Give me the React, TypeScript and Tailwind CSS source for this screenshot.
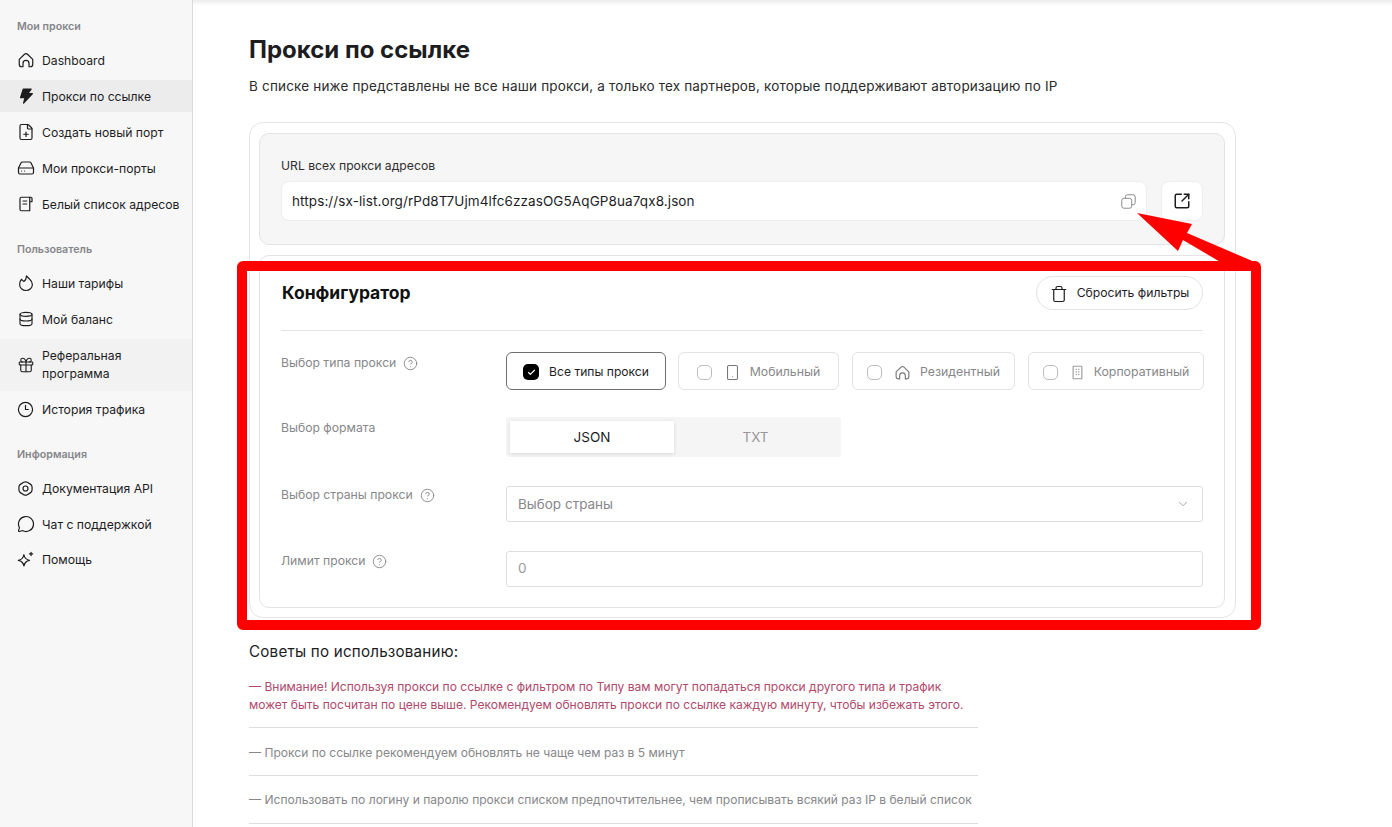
import { ChevronDown, CircleHelp, Check, Clock3, Database, FilePlus, Gift, HardDrive, MessageCircle, Smartphone, SquareArrowOutUpRight, Trash } from 'lucide-react'
import type { ReactNode } from 'react'

const HomeIcon = ({ className = '' }: { className?: string }) => (
  <svg viewBox="0 0 24 24" fill="none" stroke="currentColor" strokeWidth="1.6" strokeLinecap="round" strokeLinejoin="round" className={className}>
    <path d="M3 11.2 10 4.3a2.8 2.8 0 0 1 4 0l7 6.9v6.3a3.5 3.5 0 0 1-3.5 3.5H16v-4.5a4 4 0 0 0-8 0V21H6.500A3.500 3.500 0 0 1 3 17.500Z" />
  </svg>
)

const BoltIcon = ({ className = '' }: { className?: string }) => (
  <svg viewBox="0 0 24 24" fill="currentColor" className={className}>
    <path d="M8.500 2h10.200c.8 0 1.200.9.700 1.500L16 8h4.300c.9 0 1.300 1 .7 1.600L9.400 22c-.6.600-1.600 0-1.400-.8L9.600 15H5c-.7 0-1.200-.7-1-1.300L7.500 2.700c.1-.4.500-.7 1-.7Z" />
  </svg>
)

const NoteIcon = ({ className = '' }: { className?: string }) => (
  <svg viewBox="0 0 24 24" fill="none" stroke="currentColor" strokeWidth="1.6" strokeLinecap="round" strokeLinejoin="round" className={className}>
    <path d="M17 21H6a2 2 0 0 1-2-2V5a2 2 0 0 1 2-2h11v18Z" />
    <path d="M17 3h1.500A1.500 1.500 0 0 1 20 4.500V9h-3" />
    <path d="M8 8h5M8 12h5" />
  </svg>
)

const FlameIcon = ({ className = '' }: { className?: string }) => (
  <svg viewBox="0 0 24 24" fill="none" stroke="currentColor" strokeWidth="1.6" strokeLinecap="round" strokeLinejoin="round" className={className}>
    <path d="M6 7C4.200 9 3.500 11.800 3.500 14a8.500 8 0 0 0 17 0c0-4-2.600-6.300-4.500-8-1.300-1.200-2.500-2.300-3.300-3.500-.1 3-1.400 6-3.500 7.500C8.300 9.300 7 8.300 6 7Z" />
  </svg>
)

const GearIcon = ({ className = '' }: { className?: string }) => (
  <svg viewBox="0 0 24 24" fill="none" stroke="currentColor" strokeWidth="1.7" strokeLinecap="round" strokeLinejoin="round" className={className}>
    <path d="M9.500 3.300a5 5 0 0 1 5 0l4.300 2.500a5 5 0 0 1 2.500 4.300v3.800a5 5 0 0 1-2.500 4.300l-4.300 2.500a5 5 0 0 1-5 0l-4.300-2.500a5 5 0 0 1-2.500-4.300v-3.800a5 5 0 0 1 2.500-4.300Z" />
    <circle cx="12" cy="12" r="3.500" />
  </svg>
)

const SparkIcon = ({ className = '' }: { className?: string }) => (
  <svg viewBox="0 0 24 24" fill="none" stroke="currentColor" strokeWidth="1.6" strokeLinecap="round" strokeLinejoin="round" className={className}>
    <path d="M10 6c.8 4.200 2.800 6.200 7 7-4.200.8-6.200 2.800-7 7-.8-4.200-2.800-6.200-7-7 4.200-.8 6.200-2.800 7-7Z" />
    <path d="M19 3v4M17 5h4" />
  </svg>
)

const BuildingIcon = ({ className = '' }: { className?: string }) => (
  <svg viewBox="0 0 24 24" fill="none" stroke="currentColor" strokeWidth="1.8" className={className}>
    <rect x="5" y="2" width="14" height="20" rx="1" />
    <path d="M9 7h2M13 7h2M9 11h2M13 11h2M9 15h2M13 15h2" />
  </svg>
)

const CopyIcon = ({ className = '' }: { className?: string }) => (
  <svg viewBox="0 0 24 24" fill="none" stroke="currentColor" strokeWidth="1.4" strokeLinejoin="round" className={className}>
    <rect x="2.500" y="7.500" width="14" height="14" rx="3" />
    <path d="M7.500 7.500V5.500a3 3 0 0 1 3-3h8a3 3 0 0 1 3 3v8a3 3 0 0 1-3 3h-2" />
  </svg>
)

function Label({ children }: { children: ReactNode }) {
  return <div className="h-[18px] pl-[17px] pt-[1px] text-[10.700px] leading-[18px] font-semibold text-[#86868a]">{children}</div>
}

function NavItem({ icon, active, soft, children }: { icon: ReactNode; active?: boolean; soft?: boolean; children: ReactNode }) {
  let state = 'h-[36px]'
  if (active) state = 'my-[2px] h-[32px] bg-[#ececec]'
  if (soft) state = 'mt-[2px] bg-[#f2f2f2] pb-[8px] pt-[7px]'
  return (
    <div className={`flex items-center gap-[7px] pl-[16px] pr-2 text-[12.200px] leading-[18px] text-[#1d1d1f] ${state}`}>
      <span className="flex h-[19px] w-[19px] shrink-0 items-center justify-center">{icon}</span>
      <span className="pt-[1px]">{children}</span>
    </div>
  )
}

function Help() {
  return <CircleHelp className="h-[15px] w-[15px] text-[#8a8a8a]" strokeWidth={1.5} />
}

function TypeOption({ width, icon, active, children }: { width: string; icon?: ReactNode; active?: boolean; children: ReactNode }) {
  return (
    <div className={`flex h-[38px] items-center justify-center rounded-[6px] border pt-[2px] ${width} ${active ? 'border-[#6f6f6f] text-[12.100px] text-[#1d1d1f]' : 'border-[#e3e3e3] text-[12.300px] text-[#87878a]'}`}>
      {active ? (
        <span className="mr-[10px] flex h-[16px] w-[16px] items-center justify-center rounded-[5px] bg-black">
          <Check className="h-[9px] w-[9px] text-white" strokeWidth={3} />
        </span>
      ) : (
        <span className="mr-[12px] h-[15px] w-[15px] rounded-[5px] border border-[#bdbdbd]" />
      )}
      {icon && <span className="mr-[9px] flex">{icon}</span>}
      {children}
    </div>
  )
}

function FormRow({ label, help, height, labelTop, children }: { label: string; help?: boolean; height: string; labelTop: string; children: ReactNode }) {
  return (
    <div className={`flex ${height}`}>
      <div className={`flex w-[225px] shrink-0 items-start gap-[7px] text-[12.200px] leading-[18px] text-[#87878a] ${labelTop}`}>
        {label}
        {help && <span className="flex h-[18px] items-center"><Help /></span>}
      </div>
      <div className="min-w-0 flex-1">{children}</div>
    </div>
  )
}

export default function App() {
  return (
    <div className="flex h-screen overflow-hidden bg-white font-['Inter','Noto_Sans',sans-serif]">
      <aside className="w-[193px] shrink-0 border-r border-[#d9d9d9] bg-[#f7f7f7] pt-[17px]">
        <Label>Мои прокси</Label>
        <div className="mt-[7px]">
          <NavItem icon={<HomeIcon className="h-[18px] w-[18px]" />}>Dashboard</NavItem>
          <NavItem active icon={<BoltIcon className="h-[18px] w-[18px]" />}>Прокси по ссылке</NavItem>
          <NavItem icon={<FilePlus className="h-[18px] w-[18px]" strokeWidth={1.6} />}>Создать новый порт</NavItem>
          <NavItem icon={<HardDrive className="h-[18px] w-[18px]" strokeWidth={1.6} />}>Мои прокси-порты</NavItem>
          <NavItem icon={<NoteIcon className="h-[18px] w-[18px]" />}>Белый список адресов</NavItem>
        </div>
        <div className="mt-[18px]"><Label>Пользователь</Label></div>
        <div className="mt-[7px]">
          <NavItem icon={<FlameIcon className="h-[18px] w-[18px]" />}>Наши тарифы</NavItem>
          <NavItem icon={<Database className="h-[16px] w-[16px]" strokeWidth={1.7} />}>Мой баланс</NavItem>
          <NavItem soft icon={<Gift className="h-[18px] w-[18px]" strokeWidth={1.5} />}>Реферальная<br />программа</NavItem>
          <NavItem icon={<Clock3 className="h-[17px] w-[17px]" strokeWidth={1.7} />}>История трафика</NavItem>
        </div>
        <div className="mt-[18px]"><Label>Информация</Label></div>
        <div className="mt-[8px] [&>div]:h-[35.500px]">
          <NavItem icon={<GearIcon className="h-[17px] w-[17px]" />}>Документация API</NavItem>
          <NavItem icon={<MessageCircle className="h-[18px] w-[18px]" strokeWidth={1.6} />}>Чат с поддержкой</NavItem>
          <NavItem icon={<SparkIcon className="h-[19px] w-[19px]" />}>Помощь</NavItem>
        </div>
      </aside>

      <main className="relative min-w-0 flex-1 pl-[56px] pt-[34px]">
        <div className="absolute inset-x-0 top-0 h-[6px] bg-gradient-to-b from-[#ececec] to-white" />
        <h1 className="text-[24px] leading-[32px] font-bold text-[#1d1d1f]">Прокси по ссылке</h1>
        <p className="mt-[10px] text-[13.500px] leading-[20px] tracking-[0.18px] text-[#2b2b2b]">В списке ниже представлены не все наши прокси, а только тех партнеров, которые поддерживают авторизацию по IP</p>

        <section className="relative mt-[26px] h-[496px] w-[987px] rounded-[14px] border border-[#e5e5e5] pl-[9px] pr-[10px] pt-[10px]">
          <div className="h-[112px] rounded-[10px] border border-[#e3e3e3] bg-[#f6f6f6] px-[21px] pt-[23px]">
            <div className="text-[12.200px] leading-[18px] text-[#2f2f2f]">URL всех прокси адресов</div>
            <div className="mt-[6px] flex gap-[14px]">
              <div className="flex h-[40px] flex-1 items-center justify-between rounded-[8px] border border-[#eeeeee] bg-white pl-[10px] pr-[9px] text-[13.500px] tracking-[0.1px] text-[#1d1d1f]">
                <span className="pt-[1px]">https://sx-list.org/rPd8T7Ujm4lfc6zzasOG5AqGP8ua7qx8.json</span>
                <CopyIcon className="h-[17px] w-[17px] text-[#8c8c8c]" />
              </div>
              <div className="flex h-[40px] w-[42px] items-center justify-center rounded-[8px] border border-[#eeeeee] bg-white">
                <SquareArrowOutUpRight className="h-[18px] w-[18px] text-[#1d1d1f]" strokeWidth={2} />
              </div>
            </div>
          </div>

          <div className="mt-[10px] h-[353px] rounded-[10px] border border-[#e3e3e3] px-[21px] pt-[20px]">
            <div className="flex h-[34px] items-center justify-between">
              <h2 className="pl-[1px] text-[17.500px] font-bold text-[#111111]">Конфигуратор</h2>
              <div className="flex h-[34px] w-[167px] items-center justify-center gap-[9px] rounded-full border border-[#e3e3e3] pt-[1px] text-[12.200px] text-[#1d1d1f]">
                <Trash className="h-[18px] w-[18px]" strokeWidth={1.6} />
                Сбросить фильтры
              </div>
            </div>
            <div className="mt-[20px] h-px bg-[#e3e3e3]" />

            <div className="mt-[21px]">
              <FormRow label="Выбор типа прокси" help height="h-[65px]" labelTop="pt-[2px]">
                <div className="-mr-px flex gap-[12px]">
                  <TypeOption width="w-[160px]" active>Все типы прокси</TypeOption>
                  <TypeOption width="mr-px w-[161px]" icon={<Smartphone className="h-[17px] w-[17px] text-[#777777]" strokeWidth={1.5} />}>Мобильный</TypeOption>
                  <TypeOption width="mr-px w-[163px]" icon={<HomeIcon className="h-[17px] w-[17px] text-[#777777]" />}>Резидентный</TypeOption>
                  <TypeOption width="w-[176px]" icon={<BuildingIcon className="h-[15px] w-[15px] text-[#9a9a9a]" />}>Корпоративный</TypeOption>
                </div>
              </FormRow>
              <FormRow label="Выбор формата" height="h-[69px]" labelTop="pt-[2px]">
                <div className="flex h-[40px] w-[335px] rounded-[3px] bg-[#f5f5f5] p-[4px]">
                  <div className="flex w-[164px] items-center justify-center bg-white text-[13.500px] text-[#1d1d1f] shadow-[0_1px_4px_rgba(0,0,0,0.12)]">JSON</div>
                  <div className="flex flex-1 items-center justify-center text-[13.500px] text-[#98989a]">TXT</div>
                </div>
              </FormRow>
              <FormRow label="Выбор страны прокси" help height="h-[65px]" labelTop="pt-0">
                <div className="flex h-[36px] items-center justify-between rounded-[3px] border border-[#dedede] pl-[11px] pr-[12px] text-[13.500px] text-[#87878a]">
                  Выбор страны
                  <ChevronDown className="h-[14px] w-[14px] text-[#9a9a9a]" strokeWidth={1.5} />
                </div>
              </FormRow>
              <FormRow label="Лимит прокси" help height="h-[36px]" labelTop="pt-[1px]">
                <div className="flex h-[36px] items-center rounded-[3px] border border-[#dedede] pb-[1px] pl-[11px] text-[13.500px] text-[#9a9a9a]">0</div>
              </FormRow>
            </div>
          </div>
        </section>

        <div className="mt-[24px] w-[729px]">
          <h3 className="text-[15.200px] leading-[20px] tracking-[0.2px] text-[#1d1d1f]">Советы по использованию:</h3>
          <div className="border-b border-[#dddddd] pb-[13px] pt-[16px] text-[12.050px] leading-[18px] text-[#b04a6c]">
            — Внимание! Используя прокси по ссылке с фильтром по Типу вам могут попадаться прокси другого типа и трафик может быть посчитан по цене выше. Рекомендуем обновлять прокси по ссылке каждую минуту, чтобы избежать этого.
          </div>
          <div className="border-b border-[#dddddd] pb-[13px] pt-[16px] text-[12.050px] leading-[18px] text-[#87878a]">— Прокси по ссылке рекомендуем обновлять не чаще чем раз в 5 минут</div>
          <div className="border-b border-[#dddddd] pb-[14px] pt-[15px] text-[12.050px] leading-[18px] text-[#87878a]">— Использовать по логину и паролю прокси списком предпочтительнее, чем прописывать всякий раз IP в белый список</div>
        </div>

        {/* annotation drawn over the screenshot */}
        <div className="absolute left-[44px] top-[261px] h-[369px] w-[1024px] rounded-[6px] border-[10px] border-[#ff0000]" />
        <svg className="absolute left-[940px] top-[205px] h-[70px] w-[135px]" viewBox="0 0 135 70" fill="#ff0000">
          <path d="M4 8 L59 19 L54 28 L124 58 L89 58 L50 35 L45 46 Z" />
        </svg>
      </main>
    </div>
  )
}
